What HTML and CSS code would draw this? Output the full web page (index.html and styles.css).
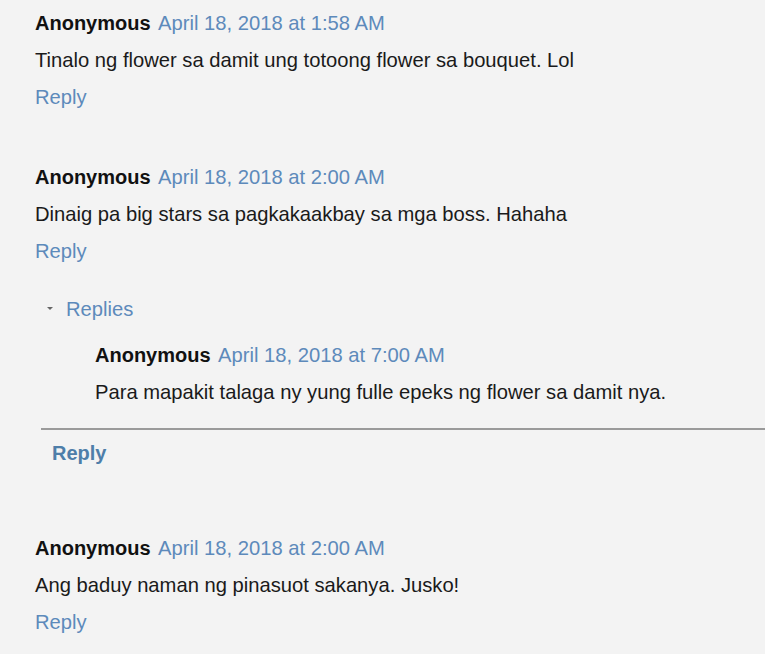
FILE: index.html
```html
<!DOCTYPE html>
<html>
<head>
<meta charset="utf-8">
<link rel="stylesheet" href="styles.css">
</head>
<body>
<div class="thread">
  <div class="comment c1">
    <div class="line"><span class="author">Anonymous</span> <a class="date">April 18, 2018 at 1:58 AM</a></div>
    <div class="line">Tinalo ng flower sa damit ung totoong flower sa bouquet. Lol</div>
    <div class="line"><a class="reply">Reply</a></div>
  </div>
  <div class="comment c2">
    <div class="line"><span class="author">Anonymous</span> <a class="date">April 18, 2018 at 2:00 AM</a></div>
    <div class="line">Dinaig pa big stars sa pagkakaakbay sa mga boss. Hahaha</div>
    <div class="line"><a class="reply">Reply</a></div>
    <div class="replies">
      <div class="line toggle"><span class="tri"></span><a class="reply">Replies</a></div>
      <div class="nested">
        <div class="line"><span class="author">Anonymous</span> <a class="date">April 18, 2018 at 7:00 AM</a></div>
        <div class="line">Para mapakit talaga ny yung fulle epeks ng flower sa damit nya.</div>
      </div>
      <div class="thread-reply">
        <div class="line"><a class="reply strong">Reply</a></div>
      </div>
    </div>
  </div>
  <div class="comment c3">
    <div class="line"><span class="author">Anonymous</span> <a class="date">April 18, 2018 at 2:00 AM</a></div>
    <div class="line">Ang baduy naman ng pinasuot sakanya. Jusko!</div>
    <div class="line"><a class="reply">Reply</a></div>
  </div>
</div>
</body>
</html>
```
FILE: styles.css
```css
html, body {
  margin: 0;
  padding: 0;
  background: #f3f3f3;
}
body {
  font-family: "Liberation Sans", Arial, sans-serif;
  font-size: 20.2px;
  color: #1a1a1a;
  width: 765px;
  height: 654px;
  overflow: hidden;
}
.thread {
  padding-top: 5px;
}
.comment {
  padding-left: 35px;
}
.line {
  height: 37px;
  line-height: 37px;
  white-space: nowrap;
}
.author {
  font-weight: bold;
  color: #111;
  font-size: 20px;
  margin-right: 3px;
}
.date {
  color: #5d8abb;
}
.reply {
  color: #5d8abb;
}
.c2 {
  margin-top: 43px;
}
.c3 {
  margin-top: 58px;
}
.replies {
  margin-top: 21px;
  margin-left: -35px;
}
.toggle {
  padding-left: 47px;
  display: flex;
  align-items: center;
}
.tri {
  width: 0;
  height: 0;
  border-left: 3px solid transparent;
  border-right: 3px solid transparent;
  border-top: 3px solid #666;
  margin-right: 13px;
  margin-top: -2px;
}
.nested {
  margin-top: 9px;
  padding-left: 95px;
}
.thread-reply {
  margin-left: 41px;
  margin-top: 17px;
  border-top: 2px solid #9a9a9a;
  padding-left: 11px;
  padding-top: 5px;
}
.reply.strong {
  font-weight: bold;
  color: #4e7ea9;
  font-size: 20px;
}
```
